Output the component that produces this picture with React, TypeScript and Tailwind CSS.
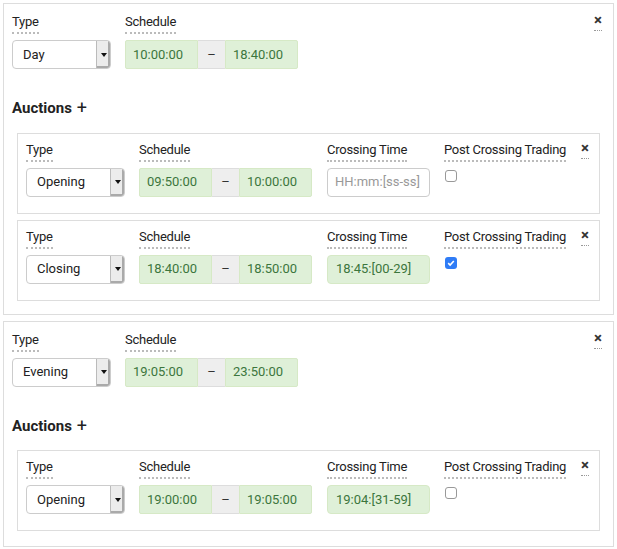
import React from 'react';

const Label: React.FC<{ text: string }> = ({ text }) => (
  <div className="flex mb-[6px]">
    <span className="whitespace-nowrap text-[13px] leading-[16px] tracking-[-0.25px] text-[#222] border-b-2 border-dotted border-[#bbb] pb-[2px]">{text}</span>
  </div>
);

const CloseX: React.FC = () => (
  <span className="text-[15px] leading-[14px] font-bold text-[#333] border-b border-dotted border-[#999] pb-[1px]">×</span>
);

const TypeSelect: React.FC<{ value: string }> = ({ value }) => (
  <div className="w-[99px] shrink-0">
    <Label text="Type" />
    <div className="h-[29px] flex items-stretch border border-[#ccc] rounded-[4px] bg-white overflow-hidden">
      <span className="flex-1 flex items-center pl-[10px] text-[13px] text-[#222]">{value}</span>
      <span className="w-[14px] flex items-center justify-center bg-[#ececec] border-l border-[#bbb] shadow-[inset_-2px_-2px_0_#aaa]">
        <span className="w-0 h-0 border-l-[3px] border-r-[3px] border-t-[4px] border-l-transparent border-r-transparent border-t-[#111]" />
      </span>
    </div>
  </div>
);

const Schedule: React.FC<{ from: string; to: string }> = ({ from, to }) => (
  <div className="w-[173px] shrink-0">
    <Label text="Schedule" />
    <div className="h-[29px] flex text-[13px]">
      <span className="w-[73px] flex items-center pl-[7px] bg-[#dff0d8] border border-[#d6e9c6] rounded-l-[2px] text-[#3c763d]">{from}</span>
      <span className="w-[27px] flex items-center justify-center bg-[#eeeeee] border-y border-[#ddd] text-[#333]">–</span>
      <span className="w-[73px] flex items-center pl-[7px] bg-[#dff0d8] border border-[#d6e9c6] rounded-r-[2px] text-[#3c763d]">{to}</span>
    </div>
  </div>
);

const Checkbox: React.FC<{ checked?: boolean }> = ({ checked }) =>
  checked ? (
    <span className="block w-[12px] h-[12px] rounded-[3px] bg-[#2f7cf6]">
      <svg width="12" height="12" viewBox="0 0 12 12" className="block"><path d="M3.2 6.2 L5.1 8 L8.8 4" stroke="white" strokeWidth="1.6" fill="none" /></svg>
    </span>
  ) : (
    <span className="block w-[12px] h-[12px] rounded-[3px] border border-[#999] bg-white" />
  );

type Auction = { type: string; from: string; to: string; crossing?: string; post?: boolean };

const AuctionRow: React.FC<{ a: Auction }> = ({ a }) => (
  <div className="border border-[#ddd] mx-[5px] px-[8px] pt-[8px] pb-[16px] flex gap-[14px]">
    <TypeSelect value={a.type} />
    <Schedule from={a.from} to={a.to} />
    <div className="w-[103px] ml-[1px] shrink-0">
      <Label text="Crossing Time" />
      {a.crossing ? (
        <div className="h-[29px] flex items-center pl-[8px] bg-[#dff0d8] border border-[#d6e9c6] rounded-[4px] text-[13px] text-[#3c763d]">{a.crossing}</div>
      ) : (
        <div className="h-[29px] flex items-center pl-[7px] bg-white border border-[#ccc] rounded-[4px] text-[13px] text-[#999]">HH:mm:[ss-ss]</div>
      )}
    </div>
    <div className="shrink-0">
      <Label text="Post Crossing Trading" />
      <div className="pl-[1px] pt-[2px]"><Checkbox checked={a.post} /></div>
    </div>
    <div className="ml-auto -mt-[6px] pr-[2px]"><CloseX /></div>
  </div>
);

const Session: React.FC<{ type: string; from: string; to: string; auctions: Auction[]; last?: boolean }> = ({ type, from, to, auctions, last }) => (
  <div className={`border border-[#ddd] pt-[10px] px-[8px] ${last ? 'pb-[15px]' : 'pb-[13px]'}`}>
    <div className="flex gap-[14px]">
      <TypeSelect value={type} />
      <Schedule from={from} to={to} />
      <div className="ml-auto -mt-[6px] pr-[3px]"><CloseX /></div>
    </div>
    <div className="mt-[28px] mb-[13px] text-[15px] font-bold text-[#222] flex items-center gap-[5px]">
      Auctions <span className="font-normal text-[18px] leading-[18px]">+</span>
    </div>
    <div className="flex flex-col gap-[6px]">
      {auctions.map((a, i) => <AuctionRow key={i} a={a} />)}
    </div>
  </div>
);

const App: React.FC = () => (
  <div className="w-[617px] h-[549px] bg-white px-[3px] pt-[3px]" style={{ fontFamily: 'Roboto, "Liberation Sans", sans-serif' }}>
    <div className="w-[611px] flex flex-col gap-[6px]">
      <Session
        type="Day"
        from="10:00:00"
        to="18:40:00"
        auctions={[
          { type: 'Opening', from: '09:50:00', to: '10:00:00' },
          { type: 'Closing', from: '18:40:00', to: '18:50:00', crossing: '18:45:[00-29]', post: true },
        ]}
      />
      <Session
        type="Evening"
        from="19:05:00"
        to="23:50:00"
        last
        auctions={[{ type: 'Opening', from: '19:00:00', to: '19:05:00', crossing: '19:04:[31-59]' }]}
      />
    </div>
  </div>
);

export default App;
